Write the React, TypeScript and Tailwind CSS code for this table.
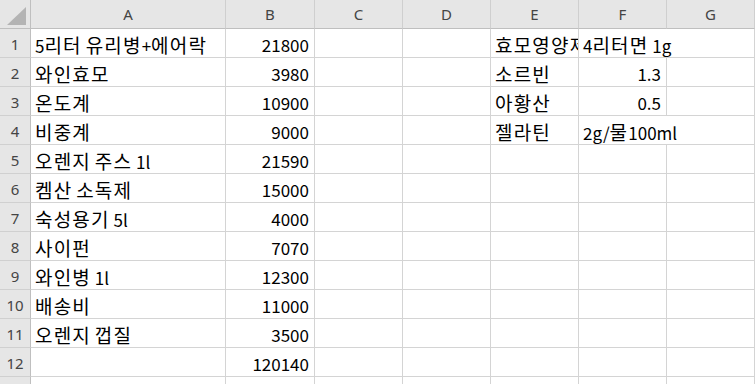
const COLS = ["A", "B", "C", "D", "E", "F", "G"]

type Cell = { v: string; right?: boolean; overflow?: boolean; clip?: boolean }

const ROWS: Record<number, Partial<Record<string, Cell>>> = {
  1: {
    A: { v: "5리터 유리병+에어락" },
    B: { v: "21800", right: true },
    E: { v: "효모영양제", clip: true },
    F: { v: "4리터면 1g", overflow: true },
  },
  2: { A: { v: "와인효모" }, B: { v: "3980", right: true }, E: { v: "소르빈" }, F: { v: "1.3", right: true } },
  3: { A: { v: "온도계" }, B: { v: "10900", right: true }, E: { v: "아황산" }, F: { v: "0.5", right: true } },
  4: { A: { v: "비중계" }, B: { v: "9000", right: true }, E: { v: "젤라틴" }, F: { v: "2g/물100ml", overflow: true } },
  5: { A: { v: "오렌지 주스 1l" }, B: { v: "21590", right: true } },
  6: { A: { v: "켐산 소독제" }, B: { v: "15000", right: true } },
  7: { A: { v: "숙성용기 5l" }, B: { v: "4000", right: true } },
  8: { A: { v: "사이펀" }, B: { v: "7070", right: true } },
  9: { A: { v: "와인병 1l" }, B: { v: "12300", right: true } },
  10: { A: { v: "배송비" }, B: { v: "11000", right: true } },
  11: { A: { v: "오렌지 껍질" }, B: { v: "3500", right: true } },
  12: { B: { v: "120140", right: true } },
  13: {},
}

const cellFont = { fontFamily: '"Noto Sans CJK KR", "Noto Sans", sans-serif' }

// hangul in the screenshot renders wider than the latin/digits
function Runs({ text }: { text: string }) {
  const parts = text.split(/([\uAC00-\uD7A3]+)/).filter(Boolean)
  return (
    <>
      {parts.map((p, i) =>
        /[\uAC00-\uD7A3]/.test(p) ? (
          <span key={i} className="text-[19px] tracking-[1.2px]">{p}</span>
        ) : (
          <span key={i}>{p.replace(/ /g, "\u00a0")}</span>
        )
      )}
    </>
  )
}

export default function App() {
  return (
    <div className="w-[755px] h-[384px] overflow-hidden bg-white">
      <div
        className="grid grid-cols-[31px_195px_89px_88px_88px_88px_88px_88px] auto-rows-[29px] w-max"
        style={{ fontFamily: '"Noto Sans", "Open Sans", sans-serif' }}
      >
        {/* corner */}
        <div className="bg-[#e6e6e6] border-r border-b border-[#bfbfbf] flex items-end justify-end pr-[4px] pb-[3px]">
          <svg width="19" height="18" viewBox="0 0 19 18">
            <polygon points="19,0 19,18 0,18" fill="#b4b4b4" />
          </svg>
        </div>
        {COLS.map((c) => (
          <div
            key={c}
            className="bg-[#e6e6e6] border-r border-r-[#cfcfcf] border-b border-b-[#bfbfbf] flex items-center justify-center text-[15px] text-[#444]"
          >
            {c}
          </div>
        ))}

        {Object.keys(ROWS).map((k) => {
          const n = Number(k)
          const row = ROWS[n]
          return (
            <div key={n} className="contents">
              <div className="bg-[#e6e6e6] border-r border-r-[#bfbfbf] border-b border-b-[#d0d0d0] flex items-center justify-center text-[15px] text-[#444] pt-[2px]">
                {n}
              </div>
              {COLS.map((c) => {
                const cell = row[c]
                return (
                  <div
                    key={c}
                    className={`border-b border-b-[#d4d4d4] ${cell?.overflow ? "" : "border-r border-r-[#d4d4d4]"} flex items-center pt-[3px] text-[17px] text-black leading-none whitespace-nowrap ${
                      cell?.right ? "justify-end pr-[5px]" : "pl-[4px]"
                    } ${cell?.clip ? "overflow-hidden" : ""}`}
                    style={cellFont}
                  >
                    {cell && (
                      <span className="relative z-10">
                        <Runs text={cell.v} />
                      </span>
                    )}
                  </div>
                )
              })}
            </div>
          )
        })}
      </div>
    </div>
  )
}
